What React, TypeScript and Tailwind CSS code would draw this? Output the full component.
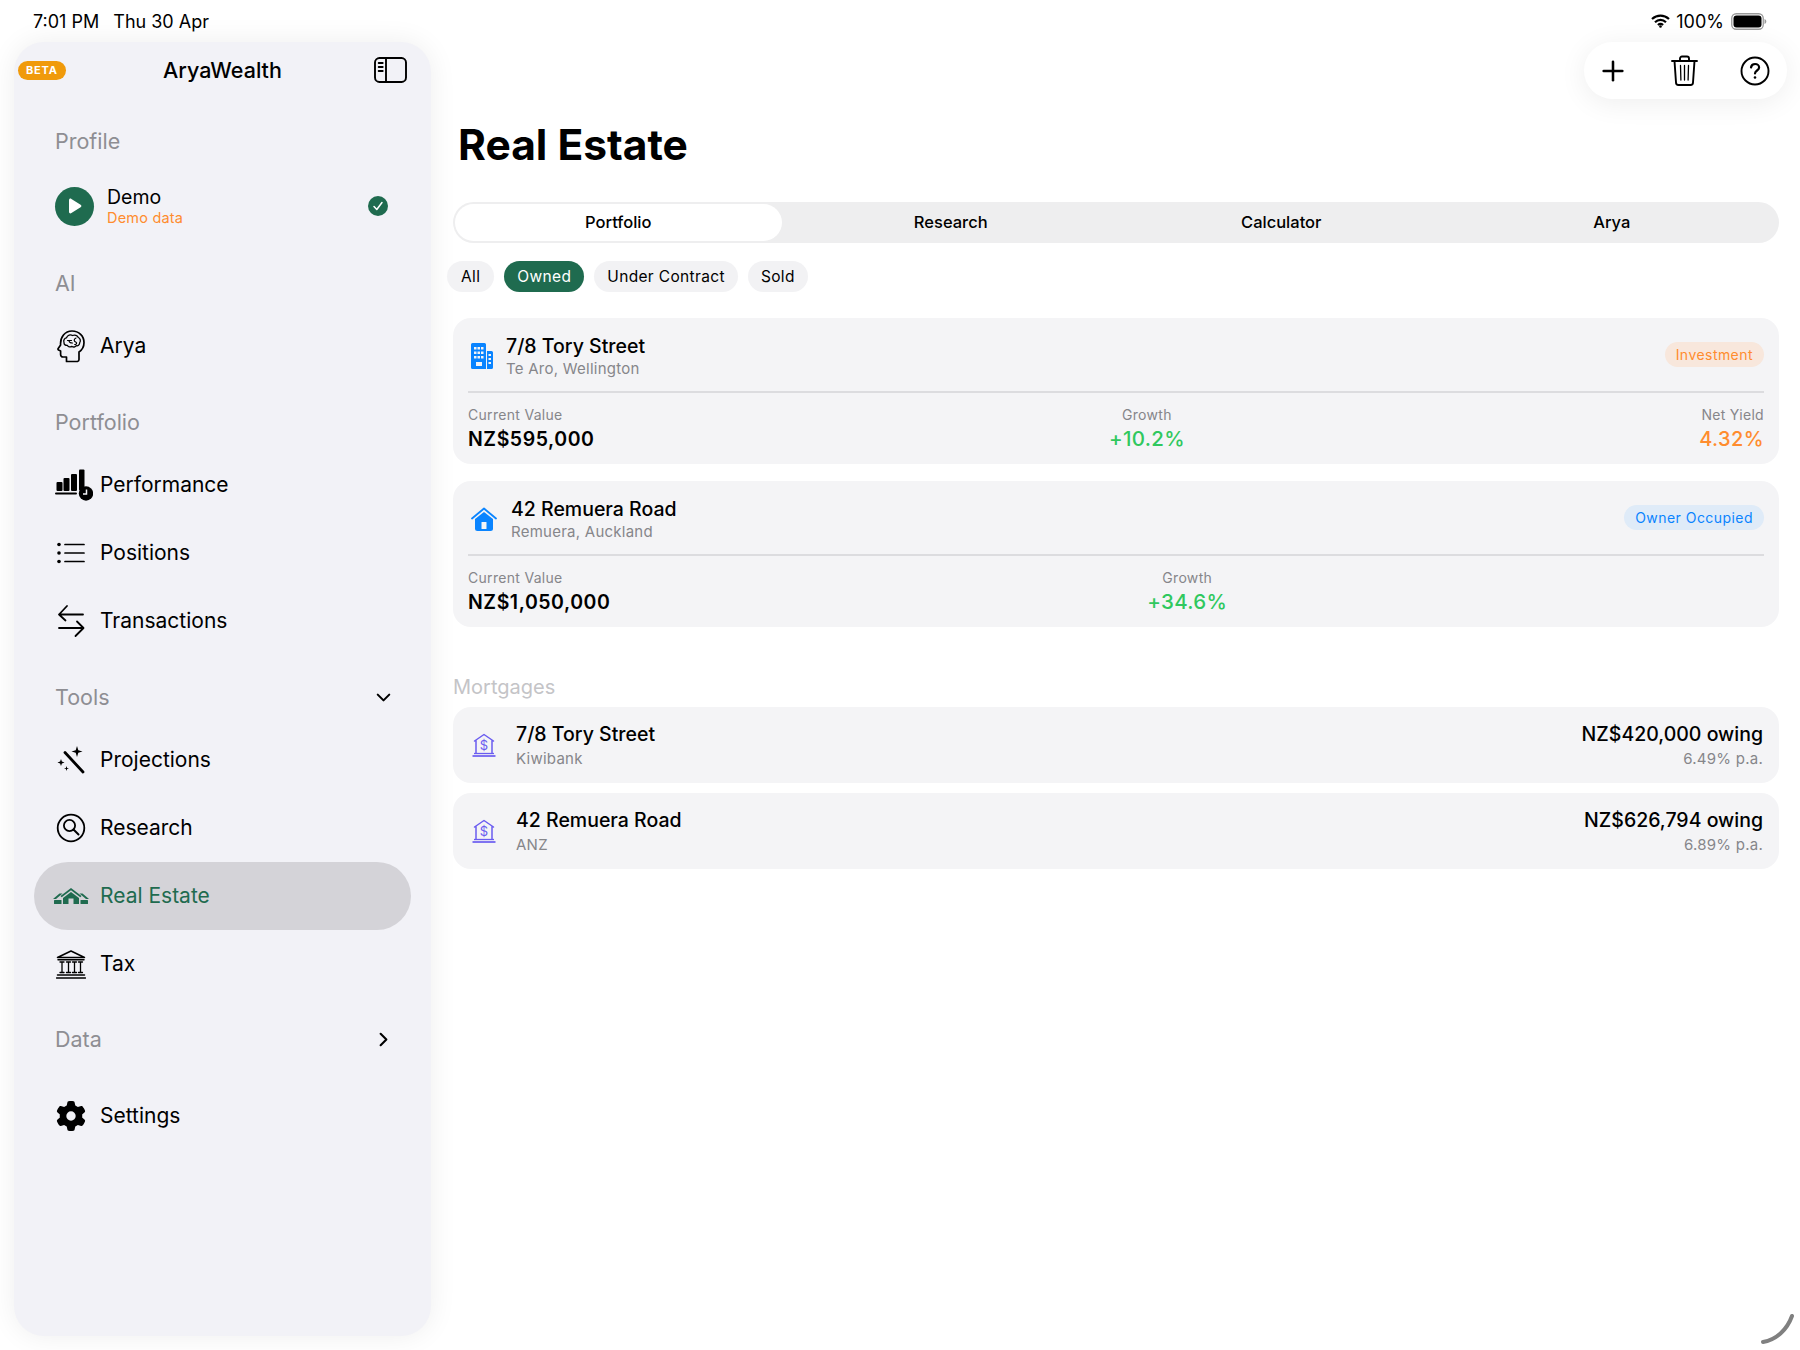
import type { ReactNode } from 'react';
import { ChevronDown, ChevronRight, Plus } from 'lucide-react';
import { FaGear } from 'react-icons/fa6';

const line = { fill: 'none', stroke: 'currentColor', strokeLinecap: 'round', strokeLinejoin: 'round' } as const;

function BrainHeadIcon() {
  return (
    <svg width="28" height="33" viewBox="0 0 28 33" {...line} strokeWidth="1.700">
      <path d="M20.500 31.500H9.500V27H6a2.400 2.400 0 0 1-2.400-2.400V21L1.600 20c-.7-.4-.8-1-.4-1.600L3.600 15C3 7 8 1 15 1c7 0 12 5 12 11.500 0 4.500-2 7.500-5 9.500v7.500a2 2 0 0 1-1.500 2z" />
      <path d="M7 12.500c-1-2.500.8-4.500 2.500-4.700C10.500 5 13.500 4.300 15.500 5.500c2.300-1 5 0 5.800 2 2 .8 2.700 3.500 1.400 5.200-.2 2.300-1.800 3.500-3.400 3-1 1.500-3 1.700-4.300.7-1.500 1-3.800.6-4.500-1-1.700.2-3.800-.7-3.500-2.900z" strokeWidth="1.300" />
      <path d="M10.500 10.500h4M12 10.500c0 2.500 1.500 2.500 3.500 2.500M19 8c-2.500 1-2.300 3.500 0 4.200 1.300.8.300 2.800-1.300 2.300" strokeWidth="1.200" />
    </svg>
  );
}

function PerformanceIcon() {
  return (
    <svg width="38" height="32" viewBox="0 0 38 32" fill="currentColor" className="ml-[6px]">
      <rect x="1.500" y="13" width="6" height="9" rx="1" />
      <rect x="8.500" y="9" width="6" height="13" rx="1" />
      <rect x="16" y="5" width="6" height="17" rx="1" />
      <rect x="24" y="0.500" width="5.500" height="21" rx="1" />
      <rect x="0" y="23.500" width="22" height="2" rx="1" />
      <circle cx="31" cy="24.500" r="7.200" />
      <path d="M31.500 20.500v4.500h-3.500" fill="none" stroke="#f2f2f7" strokeWidth="1.500" />
    </svg>
  );
}

function PositionsIcon() {
  return (
    <svg width="28" height="22" viewBox="0 0 28 22" fill="currentColor">
      <circle cx="2" cy="2.500" r="1.800" />
      <circle cx="2" cy="11" r="1.800" />
      <circle cx="2" cy="19.500" r="1.800" />
      <path d="M8 2.500h19M8 11h19M8 19.500h19" {...line} strokeWidth="1.700" />
    </svg>
  );
}

function TransactionsIcon() {
  return (
    <svg width="28" height="34" viewBox="0 0 28 34" {...line} strokeWidth="1.800">
      <path d="M2 10.500h24M10 2 2 10.500l6.500 6" />
      <path d="M2 24h24M20 17.500l6.500 6.500-8 8" />
    </svg>
  );
}

function WandIcon() {
  return (
    <svg width="28" height="28" viewBox="0 0 28 28" fill="currentColor">
      <path d="M8 6.500 26 26" {...line} strokeWidth="2.800" />
      <path d="M20 0l1.300 4.200L25.500 5.500l-4.200 1.300L20 11l-1.300-4.200L14.500 5.500l4.200-1.300zM4 13l.9 2.600 2.600.9-2.600.9L4 20l-.9-2.600L.5 16.500l2.600-.9zM9.500 20l.6 1.900 1.900.6-1.900.6-.6 1.900-.6-1.900-1.900-.6 1.900-.6z" />
    </svg>
  );
}

function ResearchIcon() {
  return (
    <svg width="30" height="30" viewBox="0 0 30 30" {...line} strokeWidth="1.800">
      <circle cx="15" cy="15" r="13.300" />
      <circle cx="13.500" cy="12.500" r="5.600" />
      <path d="M17.500 16.500l5 5" strokeWidth="2" />
    </svg>
  );
}

function RealEstateIcon() {
  return (
    <svg width="36" height="16" viewBox="0 0 36 16" fill="currentColor">
      <path d="M18 0 28.500 8l-1.200 1.300L18 2.300 8.700 9.300 7.500 8z" />
      <path d="M18 4 26 10v6H10v-6z" />
      <path d="M6.500 5.500h3L3 11H0zM26.500 5.500h3L36 11h-3z" />
      <rect x="1" y="12" width="7.500" height="4" rx="0.500" />
      <rect x="27.500" y="12" width="7.500" height="4" rx="0.500" />
      <rect x="15.500" y="10.500" width="5" height="5.500" fill="#d4d3d8" />
    </svg>
  );
}

function TaxIcon() {
  return (
    <svg width="30" height="29" viewBox="0 0 30 29" {...line} strokeWidth="1.500">
      <path d="M1.500 7.500 15 1l13.500 6.500zM2 9.800h26" />
      <path d="M4 12h4M6 12v10.500M4 22.500h4M10.500 12h4M12.500 12v10.500M10.500 22.500h4M16.500 12h4M18.500 12v10.500M16.500 22.500h4M22.500 12h4M24.500 12v10.500M22.500 22.500h4" strokeWidth="1.300" />
      <path d="M1.500 25h27M.5 28h29" />
    </svg>
  );
}

function SidebarToggleIcon() {
  return (
    <svg width="33" height="26" viewBox="0 0 33 26" {...line} strokeWidth="1.900">
      <rect x="1" y="1" width="31" height="24" rx="4.500" />
      <path d="M12 1v24M4.700 6h4M4.700 10h4M4.700 14h4" />
    </svg>
  );
}

function BuildingIcon() {
  return (
    <svg width="22" height="26" viewBox="0 0 22 26" className="shrink-0">
      <path d="M1.500 0h12A1.500 1.500 0 0 1 15 1.500V26H1.500A1.500 1.500 0 0 1 0 24.500v-23A1.500 1.500 0 0 1 1.500 0zM16 8h4.500A1.500 1.500 0 0 1 22 9.500v15a1.500 1.500 0 0 1-1.500 1.500H16z" fill="#0a84ff" />
      <path d="M3 4h2.500v2.500H3zM6.500 4H9v2.500H6.500zM10 4h2.500v2.500H10zM3 8.500h2.500V11H3zM6.500 8.500H9V11H6.500zM10 8.500h2.500V11H10zM3 13h2.500v2.500H3zM6.500 13H9v2.500H6.500zM10 13h2.500v2.500H10zM5 19h6v4H5zM17.500 11H20v2h-2.500zM17.500 15H20v2h-2.500zM17.500 19H20v2h-2.500z" fill="#f4f4f6" />
    </svg>
  );
}

function HouseIcon() {
  return (
    <svg width="26" height="24" viewBox="0 0 26 24" className="shrink-0">
      <path d="M13 5 22 12v9.500A2.500 2.500 0 0 1 19.500 24h-13A2.500 2.500 0 0 1 4 21.500V12z" fill="#0a84ff" />
      <path d="M1 11.500 13 1.500l12 10" fill="none" stroke="#0a84ff" strokeWidth="1.800" strokeLinecap="round" strokeLinejoin="round" />
      <rect x="10.500" y="15" width="5" height="7" rx="0.500" fill="#f4f4f6" />
    </svg>
  );
}

function MortgageIcon() {
  return (
    <svg width="24" height="24" viewBox="0 0 24 24" fill="none" stroke="#6a5cf0" className="shrink-0">
      <path d="M2.500 8 12 1.500 21.500 8M4 7.500V20M20 7.500V20" strokeWidth="1.500" strokeLinejoin="round" strokeLinecap="round" />
      <path d="M2 20.500h20" strokeWidth="1.300" />
      <path d="M0.500 23h23" strokeWidth="1.700" />
      <text x="12" y="16.500" textAnchor="middle" fontSize="13" fill="#6a5cf0" stroke="none" fontFamily="Inter, sans-serif">$</text>
    </svg>
  );
}

function TrashIcon() {
  return (
    <svg width="27" height="31" viewBox="0 0 27 31" {...line} strokeWidth="1.900">
      <path d="M1 6h25M9 6V3.500A2 2 0 0 1 11 1.500h5a2 2 0 0 1 2 2V6" />
      <path d="M3.500 6l1.500 21.500A2.500 2.500 0 0 0 7.500 30h12a2.500 2.500 0 0 0 2.500-2.500L23.500 6" />
      <path d="M9.500 10.500l.4 14.500M13.500 10.500V25M17.500 10.500 17.100 25" strokeWidth="1.300" />
    </svg>
  );
}

function HelpIcon() {
  return (
    <svg width="30" height="30" viewBox="0 0 30 30" {...line} strokeWidth="1.900">
      <circle cx="15" cy="15" r="13.500" />
      <path d="M11 11.500c.3-2.200 2-3.500 4.100-3.500 2.300 0 4 1.500 4 3.500 0 3-4.100 3-4.100 6" strokeWidth="2.200" />
      <circle cx="15" cy="21.500" r="1.300" fill="currentColor" stroke="none" />
    </svg>
  );
}

function SectionLabel({ text, chevron, className }: { text: string; chevron?: ReactNode; className: string }) {
  return (
    <div className={`flex h-[28px] items-center justify-between pl-[41px] pr-[36px] text-[21.500px] leading-[28px] text-[#8e8e93] ${className}`}>
      <span>{text}</span>
      {chevron}
    </div>
  );
}

function NavRow({ icon, label, active }: { icon: ReactNode; label: string; active?: boolean }) {
  return (
    <div className={`mx-[20px] flex h-[68px] items-center gap-[14px] rounded-[34px] pl-[22px] text-[21px] ${active ? 'bg-[#d4d3d8] text-[#1f6b4f]' : 'text-black'}`}>
      <span className="flex w-[30px] shrink-0 items-center justify-center [&>svg]:shrink-0">{icon}</span>
      <span>{label}</span>
    </div>
  );
}

function Stat({ label, value, align, valueClass }: { label: string; value: string; align: string; valueClass: string }) {
  return (
    <div className={align}>
      <div className="text-[14px] leading-[20px] tracking-[0.3px] text-[#86868a]">{label}</div>
      <div className={`leading-[28px] ${valueClass}`}>{value}</div>
    </div>
  );
}

function PropertyCard({
  icon, name, place, tag, tagClass, value, growth, yieldPct, gap,
}: {
  icon: ReactNode; name: string; place: string; tag: string; tagClass: string;
  value: string; growth: string; yieldPct?: string; gap: string;
}) {
  return (
    <div className="h-[146px] rounded-[18px] bg-[#f4f4f6] px-[15px]">
      <div className="flex h-[75px] items-center justify-between border-b-2 border-[#dcdcdf] pt-[3px]">
        <div className={`ml-[3px] flex items-center ${gap}`}>
          {icon}
          <div>
            <div className="text-[19.500px] leading-[26px] font-medium text-black">{name}</div>
            <div className="text-[15px] leading-[20px] tracking-[0.25px] text-[#86868a]">{place}</div>
          </div>
        </div>
        <span className={`-mt-[3px] rounded-full px-[11px] text-[14px] leading-[25px] tracking-[0.45px] ${tagClass}`}>{tag}</span>
      </div>
      <div className="flex justify-between pt-[12px]">
        <Stat label="Current Value" value={value} align="" valueClass="text-[19.500px] font-semibold tracking-[0.55px] text-black" />
        <Stat label="Growth" value={growth} align="text-center" valueClass="text-[20.500px] font-medium tracking-[0.3px] text-[#30c85e]" />
        {yieldPct ? (
          <Stat label="Net Yield" value={yieldPct} align="text-right" valueClass="text-[20px] font-medium tracking-[0.4px] text-[#ff8c2e]" />
        ) : (
          <div />
        )}
      </div>
    </div>
  );
}

function MortgageRow({ name, bank, owing, rate }: { name: string; bank: string; owing: string; rate: string }) {
  return (
    <div className="flex h-[76px] items-center justify-between rounded-[18px] bg-[#f4f4f6] pl-[19px] pr-[16px]">
      <div className="flex items-center gap-[20px]">
        <MortgageIcon />
        <div>
          <div className="text-[19.500px] leading-[27px] font-medium text-black">{name}</div>
          <div className="text-[15px] leading-[22px] tracking-[0.25px] text-[#86868a]">{bank}</div>
        </div>
      </div>
      <div className="text-right">
        <div className="text-[19.500px] leading-[27px] font-medium text-black">{owing}</div>
        <div className="text-[15px] leading-[22px] tracking-[0.25px] text-[#86868a]">{rate}</div>
      </div>
    </div>
  );
}

export default function App() {
  const tabs = ['Portfolio', 'Research', 'Calculator', 'Arya'];

  return (
    <div className="relative flex h-[1350px] w-[1800px] flex-col overflow-hidden bg-white font-['Inter',sans-serif] text-black">
      {/* Status bar */}
      <div className="flex h-[42px] shrink-0 items-center justify-between pl-[33px] pr-[33px] text-[18px]">
        <div className="flex gap-[14px]">
          <span>7:01 PM</span>
          <span>Thu 30 Apr</span>
        </div>
        <div className="flex items-center gap-[6px]">
          <svg width="19" height="14" viewBox="0 0 19 14" fill="none" stroke="black" strokeWidth="2.200">
            <path d="M1 5c5-4.500 12-4.500 17 0M4 8.200c3.200-3 7.800-3 11 0M6.900 11c1.500-1.300 3.700-1.300 5.200 0" />
            <circle cx="9.500" cy="12.500" r="1.300" fill="black" stroke="none" />
          </svg>
          <span>100%</span>
          <svg width="36" height="17" viewBox="0 0 36 17" className="ml-[1px]">
            <rect x="0.750" y="0.750" width="31.500" height="15.500" rx="4.500" fill="none" stroke="#9a9a9a" strokeWidth="1.300" />
            <rect x="2.500" y="2.500" width="28" height="12" rx="3" fill="black" />
            <path d="M33.500 6v5c1.200-.4 1.800-1.400 1.800-2.500S34.700 6.400 33.500 6z" fill="#9a9a9a" />
          </svg>
        </div>
      </div>

      <div className="flex min-h-0 flex-1">
        {/* Sidebar */}
        <aside className="mb-[14px] ml-[14px] w-[417px] shrink-0 rounded-[30px] bg-[#f2f2f7] shadow-[0_0_28px_rgba(0,0,0,0.07)]">
          <div className="grid h-[56px] grid-cols-[1fr_auto_1fr] items-center px-[4px]">
            <span className="justify-self-start rounded-full bg-[#f09a0b] px-[8px] text-[11px] leading-[19px] font-bold tracking-[0.8px] text-white">BETA</span>
            <span className="text-[21.500px] font-medium">AryaWealth</span>
            <span className="mr-[20px] justify-self-end"><SidebarToggleIcon /></span>
          </div>

          <SectionLabel text="Profile" className="mb-[28px] mt-[29px]" />
          <div className="flex h-[46px] items-center pl-[41px] pr-[43px]">
            <span className="flex h-[39px] w-[39px] items-center justify-center rounded-full bg-[#1f6b4f]">
              <svg width="14" height="16" viewBox="0 0 14 16" fill="white"><path d="M1 2.200C1 .9 2.300.2 3.400.9l9.200 5.800c1 .6 1 2 0 2.600l-9.200 5.800C2.300 15.800 1 15.100 1 13.800z" /></svg>
            </span>
            <div className="ml-[13px] flex-1">
              <div className="text-[19.500px] leading-[24px]">Demo</div>
              <div className="text-[14.500px] leading-[18px] tracking-[0.2px] text-[#ff8c2e]">Demo data</div>
            </div>
            <span className="flex h-[20px] w-[20px] items-center justify-center rounded-full bg-[#1f6b4f]">
              <svg width="12" height="10" viewBox="0 0 12 10" fill="none" stroke="white" strokeWidth="1.500" strokeLinecap="round" strokeLinejoin="round"><path d="M2 5.500 4.800 8.500 10 1.500" /></svg>
            </span>
          </div>

          <SectionLabel text="AI" className="mb-[15px] mt-[40px]" />
          <NavRow icon={<BrainHeadIcon />} label="Arya" />

          <SectionLabel text="Portfolio" className="mb-[15px] mt-[28px]" />
          <NavRow icon={<PerformanceIcon />} label="Performance" />
          <NavRow icon={<PositionsIcon />} label="Positions" />
          <NavRow icon={<TransactionsIcon />} label="Transactions" />

          <SectionLabel
            text="Tools"
            className="mb-[15px] mt-[28px]"
            chevron={<ChevronDown size={23} strokeWidth={2.2} className="text-black" />}
          />
          <NavRow icon={<WandIcon />} label="Projections" />
          <NavRow icon={<ResearchIcon />} label="Research" />
          <NavRow icon={<RealEstateIcon />} label="Real Estate" active />
          <NavRow icon={<TaxIcon />} label="Tax" />

          <SectionLabel
            text="Data"
            className="mb-[29px] mt-[27px]"
            chevron={<ChevronRight size={23} strokeWidth={2.2} className="text-black" />}
          />
          <NavRow icon={<FaGear size={30} />} label="Settings" />
        </aside>

        {/* Main */}
        <main className="min-w-0 flex-1 pl-[22px] pr-[21px] pt-[75px]">
          <h1 className="ml-[5px] text-[42.500px] leading-[55px] font-bold">Real Estate</h1>

          <div className="mt-[30px] grid h-[41px] grid-cols-4 rounded-full bg-[#eeeeef] p-[2px] text-[16.500px] font-[450]">
            {tabs.map((tab, i) => (
              <div key={tab} className={`flex items-center justify-center rounded-full ${i === 0 ? 'mr-[4px] bg-white' : ''}`}>{tab}</div>
            ))}
          </div>

          <div className="-ml-[6px] mt-[18px] flex h-[31px] gap-[10px] text-[15.500px] tracking-[0.35px]">
            <span className="rounded-full bg-[#f2f2f4] px-[14px] leading-[31px]">All</span>
            <span className="rounded-full bg-[#1f6b4f] px-[13px] leading-[31px] text-white">Owned</span>
            <span className="rounded-full bg-[#f2f2f4] px-[13px] leading-[31px]">Under Contract</span>
            <span className="rounded-full bg-[#f2f2f4] px-[13px] leading-[31px]">Sold</span>
          </div>

          <div className="mt-[26px] flex flex-col gap-[17px]">
            <PropertyCard
              icon={<BuildingIcon />}
              name="7/8 Tory Street"
              place="Te Aro, Wellington"
              tag="Investment"
              tagClass="bg-[#f8e7dc] text-[#ff8c2e]"
              value="NZ$595,000"
              growth="+10.2%"
              yieldPct="4.32%"
              gap="gap-[13px]"
            />
            <PropertyCard
              icon={<HouseIcon />}
              name="42 Remuera Road"
              place="Remuera, Auckland"
              tag="Owner Occupied"
              tagClass="bg-[#dfebf8] text-[#0a84ff]"
              value="NZ$1,050,000"
              growth="+34.6%"
              gap="gap-[14px]"
            />
          </div>

          <div className="mt-[48px] text-[20px] leading-[24px] text-[#c4c4c7]">Mortgages</div>
          <div className="mt-[8px] flex flex-col gap-[10px]">
            <MortgageRow name="7/8 Tory Street" bank="Kiwibank" owing="NZ$420,000 owing" rate="6.49% p.a." />
            <MortgageRow name="42 Remuera Road" bank="ANZ" owing="NZ$626,794 owing" rate="6.89% p.a." />
          </div>
        </main>
      </div>

      {/* Floating toolbar */}
      <div className="absolute left-[1584px] top-[42px] flex h-[57px] w-[203px] items-center justify-between rounded-full bg-white pl-[13px] pr-[17px] shadow-[0_4px_28px_rgba(0,0,0,0.07)]">
        <Plus size={32} strokeWidth={1.9} />
        <TrashIcon />
        <HelpIcon />
      </div>

      {/* Window resize handle */}
      <svg className="absolute left-[1760px] top-[1312px]" width="36" height="34" viewBox="0 0 36 34" fill="none" stroke="#808080" strokeWidth="4" strokeLinecap="round">
        <path d="M3 30c13-2 24-12 29-26" />
      </svg>
    </div>
  );
}
